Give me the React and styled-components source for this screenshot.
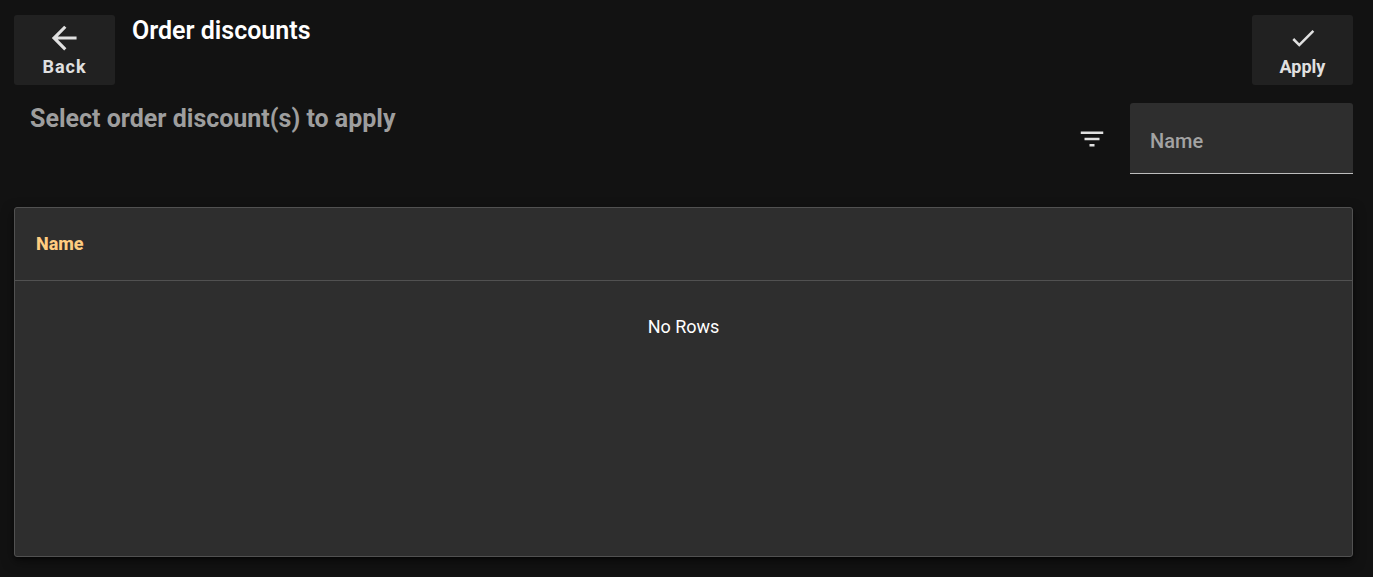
import React from "react";
import styled, { createGlobalStyle } from "styled-components";

const GlobalStyle = createGlobalStyle`
  * {
    box-sizing: border-box;
  }
  body {
    margin: 0;
    background-color: #121212;
    color: #ffffff;
    font-family: Roboto, sans-serif;
  }
`;

const Page = styled.main`
  min-height: 100vh;
  padding: 15px 20px 20px 14px;
  display: flex;
  flex-direction: column;
`;

const TopBar = styled.header`
  display: flex;
  align-items: flex-start;
  gap: 17px;
`;

const Title = styled.h1`
  flex: 1;
  margin: 0;
  font-size: 25px;
  font-weight: 600;
  line-height: 32px;
`;

const ActionButton = styled.button`
  width: 101px;
  height: 70px;
  padding: 8px 0 4px;
  border: none;
  border-radius: 3px;
  background-color: #212121;
  color: #e0e0e0;
  font-family: inherit;
  font-size: 18px;
  font-weight: 700;
  line-height: 28px;
  letter-spacing: ${(props) => (props.$wide ? "1px" : "normal")};
  display: flex;
  flex-direction: column;
  align-items: center;
  cursor: pointer;
`;

const FilterBar = styled.section`
  display: flex;
  align-items: flex-start;
  margin-top: 18px;
`;

const Subtitle = styled.h2`
  flex: 1;
  margin: 0;
  padding-left: 16px;
  color: #9e9e9e;
  font-size: 25px;
  font-weight: 700;
  line-height: 32px;
`;

const FilterButton = styled.button`
  width: 76px;
  height: 72px;
  padding: 0;
  border: none;
  background: none;
  color: #e0e0e0;
  display: grid;
  place-items: center;
  cursor: pointer;
`;

const NameInput = styled.input`
  width: 223px;
  height: 71px;
  padding: 6px 20px 0;
  border: none;
  border-bottom: 1px solid #bdbdbd;
  border-radius: 3px 3px 0 0;
  background-color: #2e2e2e;
  color: #ffffff;
  font-family: inherit;
  font-size: 20px;
  font-weight: 500;
  outline: none;
  &::placeholder {
    color: #a3a3a3;
    opacity: 1;
  }
`;

const TableCard = styled.section`
  flex: 1;
  margin-top: 32px;
  border: 1px solid #515151;
  border-radius: 3px;
  background-color: #2e2e2e;
  box-shadow: 0 3px 1px -2px rgba(0, 0, 0, 0.2), 0 2px 2px rgba(0, 0, 0, 0.14),
    0 4px 12px rgba(0, 0, 0, 0.5);
`;

const Table = styled.table`
  width: 100%;
  border-collapse: separate;
  border-spacing: 0;
  font-size: 18px;
`;

const HeadCell = styled.th`
  height: 73px;
  padding: 0 21px 2px;
  border-bottom: 1px solid #515151;
  color: #ffcc80;
  font-weight: 800;
  text-align: left;
`;

const EmptyCell = styled.td`
  height: 92px;
  padding: 0 0 2px;
  text-align: center;
`;

const Icon = ({ viewBox = "0 0 24 24", d }) => (
  <svg
    width="30"
    height="30"
    viewBox={viewBox}
    fill="currentColor"
    aria-hidden="true"
  >
    <path d={d} />
  </svg>
);

export default function App() {
  const [name, setName] = React.useState("");

  return (
    <>
      <GlobalStyle />
      <Page>
        <TopBar>
          <ActionButton type="button" $wide>
            <Icon
              viewBox="3 2.4 19.2 19.2"
              d="M20 11v2H8l5.5 5.5-1.42 1.42L4.16 12l7.92-7.92L13.5 5.5 8 11h12z"
            />
            Back
          </ActionButton>
          <Title>Order discounts</Title>
          <ActionButton type="button">
            <Icon d="M21 7L9 19l-5.5-5.5 1.41-1.41L9 16.17 19.59 5.59 21 7z" />
            Apply
          </ActionButton>
        </TopBar>
        <FilterBar>
          <Subtitle>Select order discount(s) to apply</Subtitle>
          <FilterButton type="button" aria-label="Filter">
            <Icon d="M10 18h4v-2h-4v2zM3 6v2h18V6H3zm3 7h12v-2H6v2z" />
          </FilterButton>
          <NameInput
            type="text"
            aria-label="Name"
            placeholder="Name"
            value={name}
            onChange={(e) => setName(e.target.value)}
          />
        </FilterBar>
        <TableCard>
          <Table>
            <thead>
              <tr>
                <HeadCell scope="col">Name</HeadCell>
              </tr>
            </thead>
            <tbody>
              <tr>
                <EmptyCell>No Rows</EmptyCell>
              </tr>
            </tbody>
          </Table>
        </TableCard>
      </Page>
    </>
  );
}
